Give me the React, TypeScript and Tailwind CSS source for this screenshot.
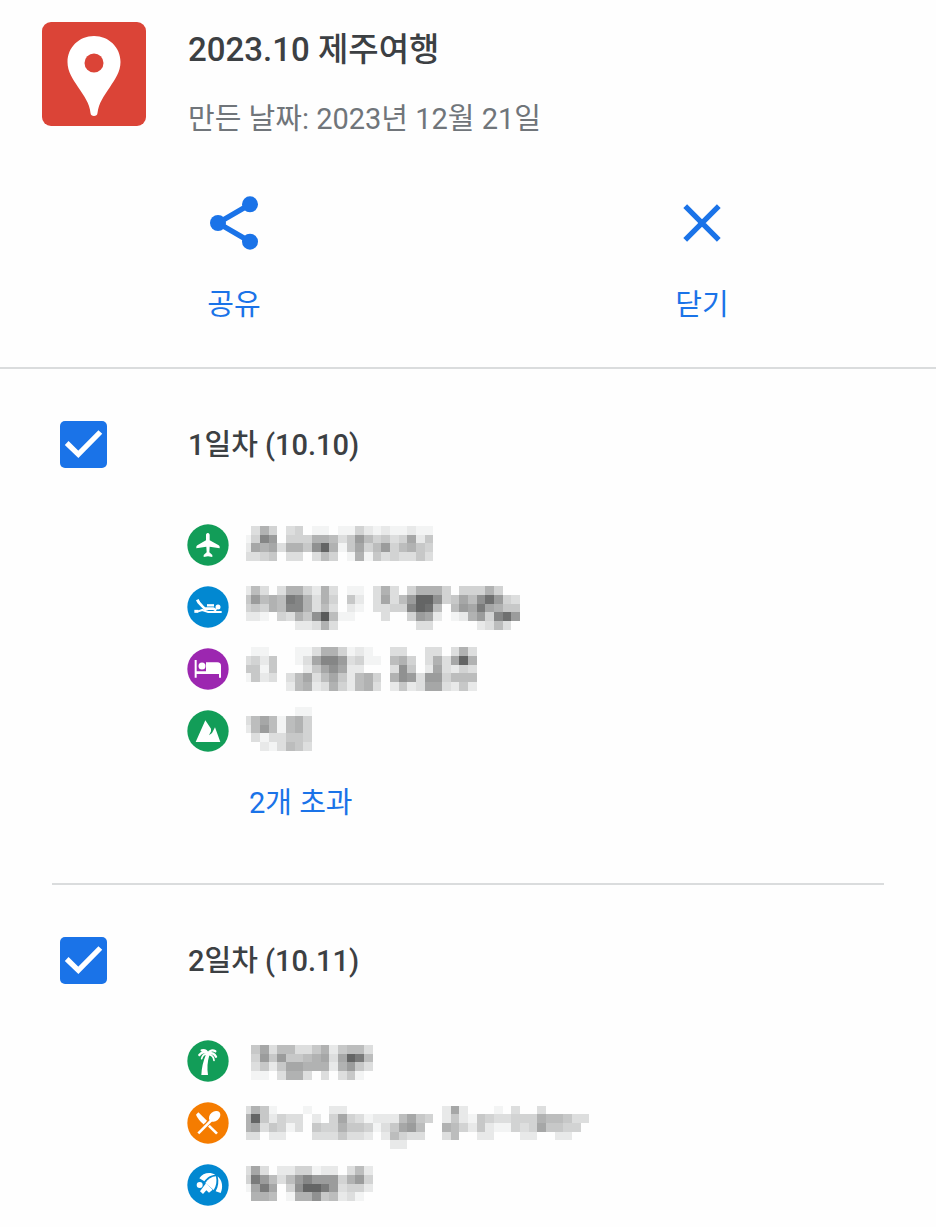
import React, { useState } from "react";

type IconName = "plane" | "swim" | "bed" | "mountain" | "palm" | "food" | "beach";

interface Place {
  icon: IconName;
  color: string;
  top: number;
  rows: string[];
}

interface Day {
  id: string;
  title: string;
  places: Place[];
  more?: string;
}

const days: Day[] = [
  {
    id: "day-1",
    title: "1일차 (10.10)",
    more: "2개 초과",
    places: [
      {
        icon: "plane",
        color: "#129d58",
        top: -57,
        rows: [
          "0374034011011421211211",
          "14b9044477635964534825",
          "28783775ae715846946754",
          "3345033036401715343353",
        ],
      },
      {
        icon: "swim",
        color: "#0288d1",
        top: -62,
        rows: [
          "26303774273011037304777404447400",
          "59676cb7374052038369eea4586ad943",
          "45476bb736302103344bed60698c8755",
          "22104375af6110003004982012794bd9",
          "00000022373000000000330000023630",
        ],
      },
      {
        icon: "bed",
        color: "#9c27b0",
        top: -65,
        rows: [
          "011000113774121003300330373",
          "342500138bb93411067403738e7",
          "5515000258a8220003a50283243",
          "152303683685267407a93994666",
          "000002672374267302523883252",
        ],
      },
      {
        icon: "mountain",
        color: "#129d58",
        top: -71,
        rows: ["00000011", "36861674", "26961674", "03133554", "00213653"],
      },
    ],
  },
  {
    id: "day-2",
    title: "2일차 (10.11)",
    places: [
      {
        icon: "palm",
        color: "#129d58",
        top: -48,
        rows: ["058366335725663", "049595567838ec6", "035258877727953", "011037730303510"],
      },
      {
        icon: "food",
        color: "#f57c00",
        top: -52,
        rows: [
          "3751000100220000000000028200010300300000",
          "7e52433020484312226854025215433444766533",
          "7835413054475541358960076425211434855440",
          "3302200033353320264330036002200022002200",
          "0000000000000000022000000000000000000000",
        ],
      },
      {
        icon: "beach",
        color: "#0288d1",
        top: -56,
        rows: ["383022441220362", "4c96369b9994794", "18c804aeec93442", "07760177a562310"],
      },
    ],
  },
];

const glyphs: Record<IconName, React.ReactNode> = {
  plane: (
    <path
      fill="#fff"
      d="M63 27c3 0 5 3 5 6v16l27 15q3 2 3 4v5L68 68l-1 17 9 8v6l-13-2-13 2v-6l9-8-1-17-30 5v-5q0-2 3-4l26-15V33c0-3 2-6 5-6z"
    />
  ),
  swim: (
    <g fill="none" stroke="#fff">
      <path strokeWidth="9" d="M29 47l8-4" />
      <path strokeWidth="8" strokeLinejoin="round" d="M34 48l13 14 6 6h26l9 5" />
      <path strokeWidth="7" d="M60 58h21" />
      <path strokeWidth="9" d="M22 76h12" />
      <path strokeWidth="6" strokeLinejoin="round" d="M33 76l13-4 18 6h40" />
      <circle cx="93" cy="63" r="7.5" fill="#fff" stroke="none" />
    </g>
  ),
  bed: (
    <g fill="#fff">
      <path d="M23 36h6v34h28V43h34q11 0 11 11v35h-6V78H29v11h-6z" />
      <circle cx="45" cy="54" r="10.500" />
    </g>
  ),
  mountain: (
    <path fill="#fff" d="M26 96l29-65 17 25 0 8-6 12 9-7 9-17 16 44z" />
  ),
  palm: (
    <g fill="none" stroke="#fff" strokeLinecap="round">
      <path fill="#fff" stroke="none" d="M43 105c1-22 5-39 14-62l10 3c-6 20-7 39-4 59z" />
      <path strokeWidth="7" d="M62 42c-9-8-18-6-25 3M63 41c-4-9-11-12-19-10M63 41c5-10 14-12 22-7M65 42c10-5 18-1 22 8" />
      <path strokeWidth="5" d="M62 43c-10-2-16 4-18 13M66 44c9 1 14 8 15 17" />
    </g>
  ),
  food: (
    <g fill="none" stroke="#fff">
      <path fill="#fff" stroke="none" d="M27 38l7-7 26 25-9 12q-18-15-24-30z" />
      <path strokeWidth="8" d="M53 59l37 36" />
      <path stroke="#f57c00" strokeWidth="14" d="M68 59L54 73" />
      <path strokeWidth="8" d="M78 50L34 94" />
      <ellipse cx="83" cy="43" rx="19" ry="14" fill="#fff" stroke="none" transform="rotate(-40 83 43)" />
    </g>
  ),
  beach: (
    <g fill="#fff">
      <path d="M37 43C47 27 68 23 85 32 71 33 59 41 52 52z" />
      <path d="M87 37c3 15 1 29-7 41L55 57C63 45 74 38 87 37z" />
      <path d="M92 37c14 13 17 32 9 50l-15-5c8-14 10-29 6-45z" />
      <path d="M57 58l20 19-11 9-8-7-10 11-9-8z" />
      <circle cx="38" cy="63" r="9" />
    </g>
  ),
};

function PlaceIcon({ name, color }: { name: IconName; color: string }) {
  return (
    <svg className="size-[42px] shrink-0" viewBox="0 0 126 126" aria-hidden="true">
      <circle cx="63" cy="63" r="62" fill={color} />
      {glyphs[name]}
    </svg>
  );
}

const CELL = 26;
const FIRST = 16;

/* A place name hidden behind grey blocks; each hex digit is the darkness of one block. */
function Mosaic({ rows, top }: { rows: string[]; top: number }) {
  const width = FIRST + (rows[0].length - 1) * CELL;
  return (
    <svg
      className="h-[42px] w-auto shrink-0 overflow-visible"
      viewBox={`0 -63 ${width} 126`}
      shapeRendering="crispEdges"
      aria-hidden="true"
    >
      {rows.flatMap((row, y) =>
        row.split("").map((digit, x) => {
          const level = parseInt(digit, 16);
          if (level === 0) return null;
          const tone = 254 - level * 11;
          return (
            <rect
              key={`${x}-${y}`}
              x={x === 0 ? 0 : FIRST + (x - 1) * CELL}
              y={top + y * CELL}
              width={x === 0 ? FIRST : CELL}
              height={CELL}
              fill={`rgb(${tone},${tone + 1},${tone + 1})`}
            />
          );
        })
      )}
    </svg>
  );
}

function DaySection({ day }: { day: Day }) {
  const [checked, setChecked] = useState(true);
  return (
    <section className="pt-[52px] pb-[60px]">
      <div className="flex items-center pl-2">
        <span className="relative flex size-[47px] shrink-0">
          <input
            id={day.id}
            type="checkbox"
            checked={checked}
            onChange={(e) => setChecked(e.target.checked)}
            className="size-full appearance-none rounded-[5px] border-4 border-[#5f6368] checked:border-0 checked:bg-[#1a73e8]"
          />
          {checked && (
            <svg className="pointer-events-none absolute inset-0 size-full" viewBox="0 0 141 141" aria-hidden="true">
              <path d="M20 66l35 34 66-67" fill="none" stroke="#fff" strokeWidth="16" />
            </svg>
          )}
        </span>
        <label htmlFor={day.id} className="ml-[81px] text-[29px] leading-10 font-medium text-[#3c4043]">
          {day.title}
        </label>
      </div>
      <ul className="mt-[56px] ml-[135px] flex flex-col gap-5">
        {day.places.map((place, i) => (
          <li key={i} className="flex items-center gap-[17px]">
            <PlaceIcon name={place.icon} color={place.color} />
            <Mosaic rows={place.rows} top={place.top} />
          </li>
        ))}
      </ul>
      {day.more && (
        <button type="button" className="mt-[31px] ml-[197px] block text-[29px] leading-10 text-[#1a73e8]">
          {day.more}
        </button>
      )}
    </section>
  );
}

export default function App() {
  return (
    <main className="bg-[#fefefe] font-['Roboto','Noto_Sans_CJK_KR',sans-serif]">
      <header className="border-b-2 border-[#dadcdd]">
        <div className="flex gap-[42px] px-[42px] pt-[22px]">
          <svg className="size-[104px] shrink-0" viewBox="0 0 104 104" aria-hidden="true">
            <rect width="104" height="104" rx="9" fill="#db4437" />
            <path
              fill="#fff"
              d="M52 14c15 0 26.500 11.500 26.500 26 0 10-5.500 17-10.500 25-6 9-11.500 16-12.500 26-.3 2.200-1.500 3-3.500 3s-3.200-.8-3.500-3c-1-10-6.500-17-12.500-26-5-8-10.500-15-10.500-25C25.500 25.500 37 14 52 14z"
            />
            <circle cx="52" cy="41" r="9.500" fill="#db4437" />
          </svg>
          <div>
            <h1 className="mt-[6px] text-[33px] leading-[44px] font-medium text-[#3c4043]">2023.10 제주여행</h1>
            <p className="mt-[27px] text-[29px] leading-10 text-[#70757a]">만든 날짜: 2023년 12월 21일</p>
          </div>
        </div>
        <div className="mt-[52px] grid grid-cols-2 justify-items-center pb-[42px] text-[29px] leading-10 text-[#1a73e8]">
          <button type="button" className="flex flex-col items-center gap-[30px]">
            <svg className="size-16" viewBox="0 0 24 24" fill="currentColor" aria-hidden="true">
              <path d="M18 5L6 12l12 7" fill="none" stroke="currentColor" strokeWidth="2" />
              <circle cx="18" cy="5" r="3" />
              <circle cx="6" cy="12" r="3" />
              <circle cx="18" cy="19" r="3" />
            </svg>
            공유
          </button>
          <button type="button" className="flex flex-col items-center gap-[30px]">
            <svg className="size-16" viewBox="0 0 24 24" fill="none" stroke="currentColor" strokeWidth="2" aria-hidden="true">
              <path d="M5.700 5.700l12.600 12.600M18.300 5.700L5.700 18.300" />
            </svg>
            닫기
          </button>
        </div>
      </header>
      <div className="divide-y-2 divide-[#dadcdd] px-[52px]">
        {days.map((day) => (
          <DaySection key={day.id} day={day} />
        ))}
      </div>
    </main>
  );
}
